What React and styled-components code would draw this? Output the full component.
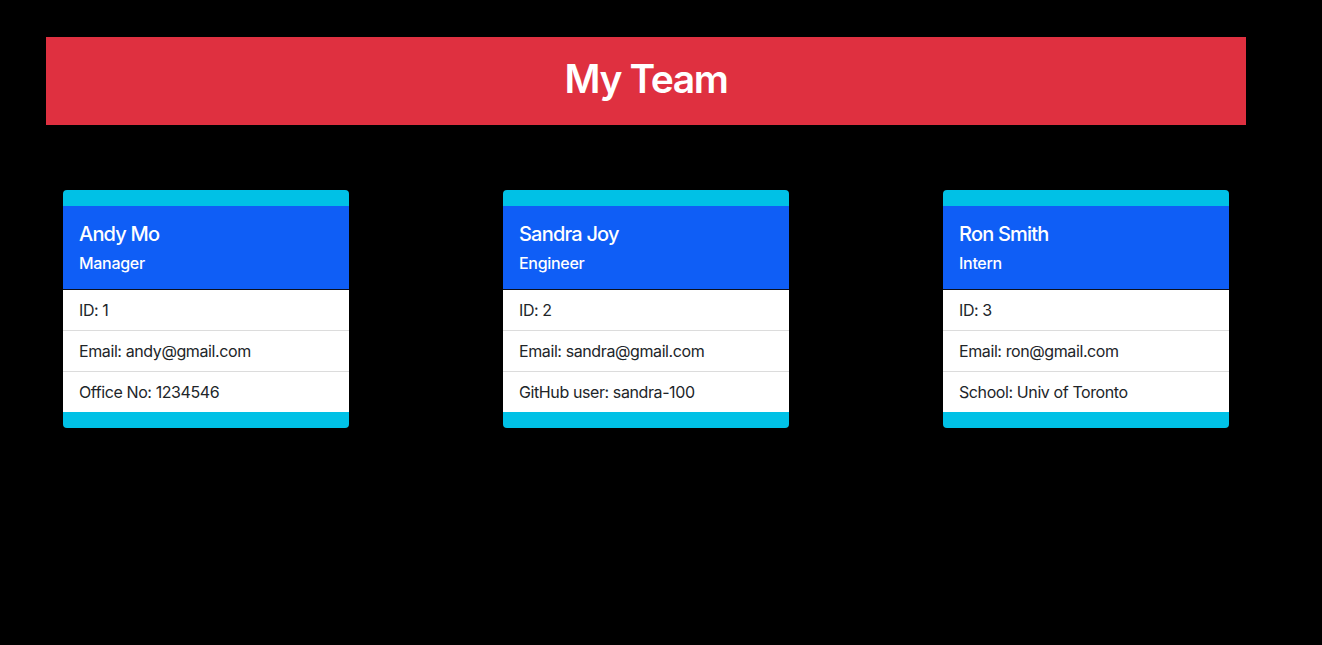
import React from "react";
import styled, { createGlobalStyle } from "styled-components";

const GlobalStyle = createGlobalStyle`
  html, body {
    margin: 0;
    padding: 0;
    background: #000;
  }
  body {
    font-family: Inter, "Noto Sans", "Liberation Sans", sans-serif;
    color: #212529;
  }
  * { box-sizing: border-box; }
`;

const Page = styled.div`
  min-height: 645px;
  background: #000;
  padding: 37px 0 0 46px;
`;

const Banner = styled.header`
  width: 1200px;
  height: 88px;
  background: #df3040;
  display: flex;
  align-items: center;
  justify-content: center;
`;

const Title = styled.h1`
  margin: 0;
  color: #fff;
  font-size: 39px;
  font-weight: 600;
  line-height: 48px;
  letter-spacing: -1.4px;
  transform: translateY(-2px);
`;

const CardRow = styled.main`
  display: flex;
  gap: 154px;
  margin-top: 65px;
  padding-left: 17px;
`;

const Card = styled.section`
  width: 286px;
  background: #00c1e6;
  border-radius: 4px;
  padding: 16px 0;
  overflow: hidden;
`;

const CardHeader = styled.div`
  background: #0f5ef6;
  color: #fff;
  padding: 16px;
  border-bottom: 1px solid #0a0f1e;
`;

const Name = styled.h5`
  margin: 0 0 8px;
  font-size: 20px;
  font-weight: 500;
  line-height: 24px;
  letter-spacing: -0.8px;
`;

const Role = styled.h6`
  margin: 0;
  font-size: 16px;
  font-weight: 500;
  line-height: 19px;
  letter-spacing: -0.3px;
`;

const List = styled.ul`
  list-style: none;
  margin: 0;
  padding: 0;
  background: #fff;
`;

const Item = styled.li`
  padding: 8px 16px;
  font-size: 16px;
  line-height: 24px;
  color: #212529;
  letter-spacing: -0.4px;
  & + & {
    border-top: 1px solid #dcdcdc;
  }
`;

const team = [
  {
    name: "Andy Mo",
    role: "Manager",
    rows: ["ID: 1", "Email: andy@gmail.com", "Office No: 1234546"],
  },
  {
    name: "Sandra Joy",
    role: "Engineer",
    rows: ["ID: 2", "Email: sandra@gmail.com", "GitHub user: sandra-100"],
  },
  {
    name: "Ron Smith",
    role: "Intern",
    rows: ["ID: 3", "Email: ron@gmail.com", "School: Univ of Toronto"],
  },
];

export default function App() {
  return (
    <>
      <GlobalStyle />
      <Page>
        <Banner>
          <Title>My Team</Title>
        </Banner>
        <CardRow>
          {team.map((m) => (
            <Card key={m.name}>
              <CardHeader>
                <Name>{m.name}</Name>
                <Role>{m.role}</Role>
              </CardHeader>
              <List>
                {m.rows.map((r) => (
                  <Item key={r}>{r}</Item>
                ))}
              </List>
            </Card>
          ))}
        </CardRow>
      </Page>
    </>
  );
}
